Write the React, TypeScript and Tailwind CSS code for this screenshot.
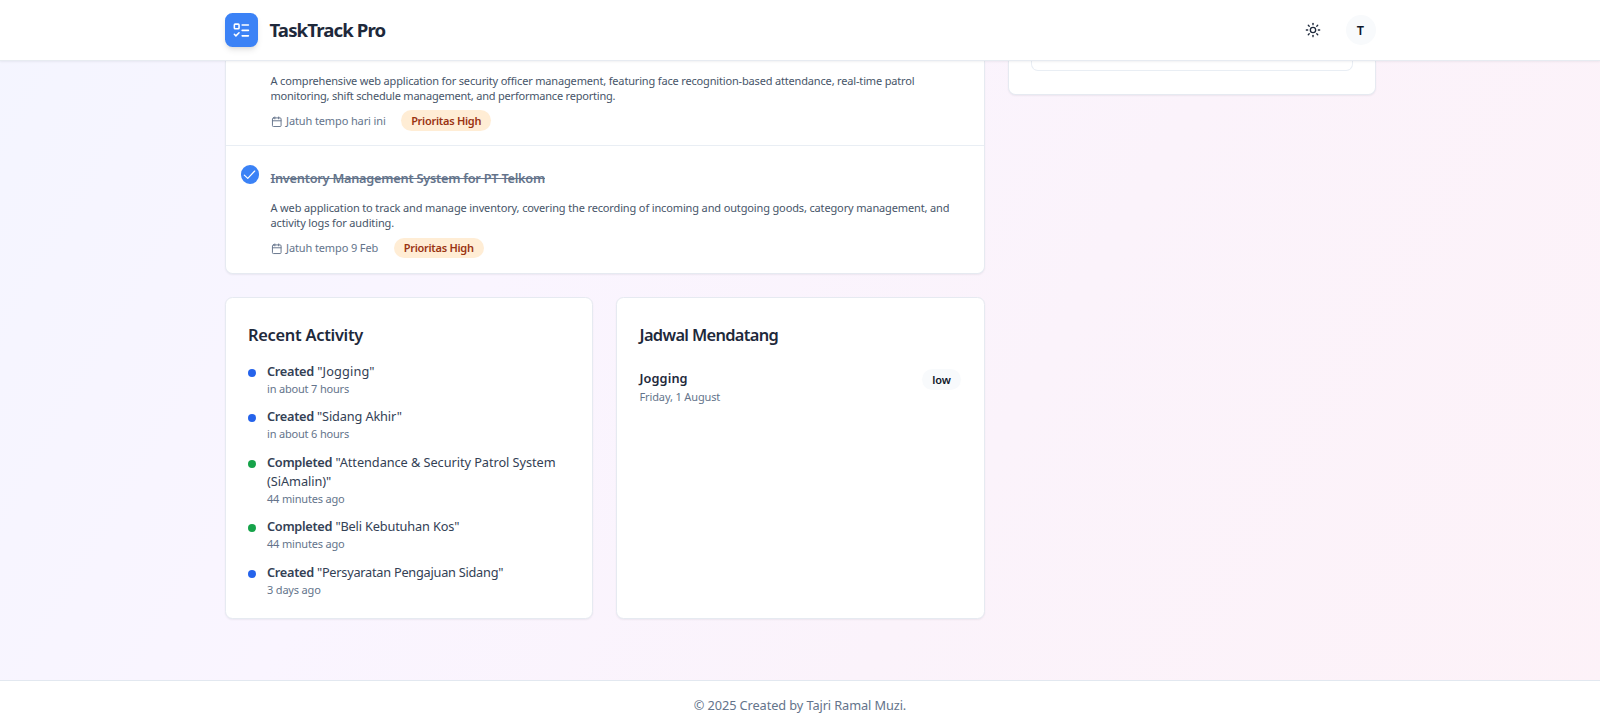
import { Calendar, ListTodo, Sun } from 'lucide-react';

type Activity = { action: 'Created' | 'Completed'; task: string; when: string; tracking: string };

const activities: Activity[] = [
  { action: 'Created', task: '"Jogging"', when: 'in about 7 hours', tracking: 'tracking-[0.12px]' },
  { action: 'Created', task: '"Sidang Akhir"', when: 'in about 6 hours', tracking: 'tracking-[-0.14px]' },
  {
    action: 'Completed',
    task: '"Attendance & Security Patrol System (SiAmalin)"',
    when: '44 minutes ago',
    tracking: 'tracking-[-0.06px]',
  },
  { action: 'Completed', task: '"Beli Kebutuhan Kos"', when: '44 minutes ago', tracking: 'tracking-[-0.16px]' },
  { action: 'Created', task: '"Persyaratan Pengajuan Sidang"', when: '3 days ago', tracking: 'tracking-[-0.25px]' },
];

function Header() {
  return (
    <header className="relative z-10 h-[61px] shrink-0 border-b border-[#e7ebf1] bg-white shadow-[0_1px_2px_rgba(15,23,42,0.06)]">
      <div className="mx-auto flex h-[60px] w-[1151px] items-center justify-between">
        <div className="flex items-center gap-[11.5px]">
          <div className="flex size-[33.5px] items-center justify-center rounded-[7.5px] bg-[#3b82f6] text-white shadow-md">
            <ListTodo className="size-[18.75px]" strokeWidth={2} />
          </div>
          <span className="text-[18.6px] leading-7 font-bold tracking-[-0.87px] text-[#1e293b]">TaskTrack Pro</span>
        </div>
        <div className="flex items-center gap-[25px]">
          <Sun className="size-[16px] text-[#1e293b]" strokeWidth={2} />
          <div className="flex size-[30px] items-center justify-center rounded-full bg-[#f8fafc] pt-px text-[12.75px] font-semibold text-[#0f172a]">
            T
          </div>
        </div>
      </div>
    </header>
  );
}

function TaskMeta({ due }: { due: string }) {
  return (
    <div className="flex h-[20.5px] items-center">
      <Calendar className="mt-[2px] mr-[4px] size-[11.5px] text-[#64748b]" />
      <span className="pt-px text-[11px] tracking-[-0.12px] text-[#64748b]">{due}</span>
      <span className="ml-[15.5px] flex h-[20.5px] items-center rounded-full bg-[#ffedd5] px-[10px] pt-px text-[11px] font-semibold tracking-[-0.27px] text-[#9a3412]">
        Prioritas High
      </span>
    </div>
  );
}

function TaskList() {
  return (
    <section className="rounded-b-[7.5px] border border-t-0 border-[#e6eaf1] bg-white shadow-[0_1px_2px_rgba(15,23,42,0.06)]">
      <div className="h-[84.5px] border-b border-[#e9eef4] pt-[11.5px] pl-[45px]">
        <p className="h-[30.5px] text-[11px] leading-[15.25px] tracking-[-0.166px] text-[#475569]">
          A comprehensive web application for security officer management, featuring face recognition-based attendance, real-time patrol
          <br />
          <span className="tracking-[-0.21px]">monitoring, shift schedule management, and performance reporting.</span>
        </p>
        <div className="pt-[7px]">
          <TaskMeta due="Jatuh tempo hari ini" />
        </div>
      </div>
      <div className="flex h-[127.5px] pt-[19.5px] pl-[15px]">
        <span className="mr-[11.5px] flex size-[18.5px] shrink-0 items-center justify-center rounded-full bg-[#3b82f6]">
          <svg viewBox="0 0 12 12" className="size-[13px]" fill="none" stroke="white" strokeWidth="1.1" strokeLinecap="round" strokeLinejoin="round">
            <path d="M1.2 6.6 4.4 9.6 10.8 2.8" />
          </svg>
        </span>
        <div>
          <h3 className="mt-[4px] h-[31px] text-[12.75px] leading-[19px] font-semibold tracking-[-0.24px] text-[#64748b] line-through">
            Inventory Management System for PT Telkom
          </h3>
          <p className="h-[30.5px] text-[11px] leading-[15.25px] tracking-[-0.14px] text-[#475569]">
            A web application to track and manage inventory, covering the recording of incoming and outgoing goods, category management, and
            <br />
            activity logs for auditing.
          </p>
          <div className="pt-[7px]">
            <TaskMeta due="Jatuh tempo 9 Feb" />
          </div>
        </div>
      </div>
    </section>
  );
}

function RecentActivity() {
  return (
    <section className="h-[322px] rounded-[7.5px] border border-[#e6eaf1] bg-white px-[22.5px] pt-[24px] shadow-[0_1px_2px_rgba(15,23,42,0.06)]">
      <h2 className="text-[16.4px] leading-[25px] font-semibold tracking-[-0.27px] text-[#1e293b]">Recent Activity</h2>
      <ul className="flex flex-col gap-[11px] pt-[15px]">
        {activities.map((a) => (
          <li key={a.task} className="flex gap-[11px]">
            <span
              className={`mt-[7px] size-2 shrink-0 rounded-full ${a.action === 'Created' ? 'bg-[#2563eb]' : 'bg-[#16a34a]'}`}
            />
            <div>
              <p className={`text-[12.75px] leading-[19px] text-[#334155] ${a.tracking}`}>
                <span className="font-semibold tracking-[-0.3px]">{a.action}</span> {a.task}
              </p>
              <p className="text-[11px] leading-[15.4px] tracking-[-0.18px] text-[#64748b]">{a.when}</p>
            </div>
          </li>
        ))}
      </ul>
    </section>
  );
}

function UpcomingSchedule() {
  return (
    <section className="h-[322px] rounded-[7.5px] border border-[#e6eaf1] bg-white px-[22.5px] pt-[24px] shadow-[0_1px_2px_rgba(15,23,42,0.06)]">
      <h2 className="text-[16.4px] leading-[25px] font-semibold tracking-[-0.66px] text-[#1e293b]">Jadwal Mendatang</h2>
      <div className="flex items-start justify-between pt-[22px]">
        <div>
          <p className="text-[12.75px] leading-[19px] font-semibold tracking-[0.1px] text-[#1e293b]">Jogging</p>
          <p className="text-[11px] leading-[17px] tracking-[-0.13px] text-[#64748b]">Friday, 1 August</p>
        </div>
        <span className="flex h-[21px] items-center rounded-full bg-[#f8fafc] px-[10px] pt-px text-[11px] font-semibold text-[#0f172a]">low</span>
      </div>
    </section>
  );
}

export default function App() {
  return (
    <div className="flex h-[728px] w-[1600px] flex-col overflow-hidden bg-[linear-gradient(120deg,#f4f5ff_0%,#faf5ff_32%,#fbf3fb_62%,#fdf2f8_100%)] font-['Noto_Sans',sans-serif]">
      <Header />
      <main className="mx-auto flex w-[1151px] grow items-start gap-[23px]">
        <div className="w-[760px]">
          <TaskList />
          <div className="grid grid-cols-2 gap-[23px] pt-[23px]">
            <RecentActivity />
            <UpcomingSchedule />
          </div>
        </div>
        <aside className="h-[34px] w-[368px] rounded-b-[7.5px] border border-t-0 border-[#e6eaf1] bg-white px-[22px] shadow-[0_1px_2px_rgba(15,23,42,0.06)]">
          <div className="h-[10px] rounded-b-[7px] border border-t-0 border-[#e9eef4]" />
        </aside>
      </main>
      <footer className="flex h-[48px] shrink-0 items-center justify-center border-t border-[#e2e8f0] bg-white pt-[3px] text-[12.75px] tracking-[-0.09px] text-[#64748b]">
        © 2025 Created by Tajri Ramal Muzi.
      </footer>
    </div>
  );
}
